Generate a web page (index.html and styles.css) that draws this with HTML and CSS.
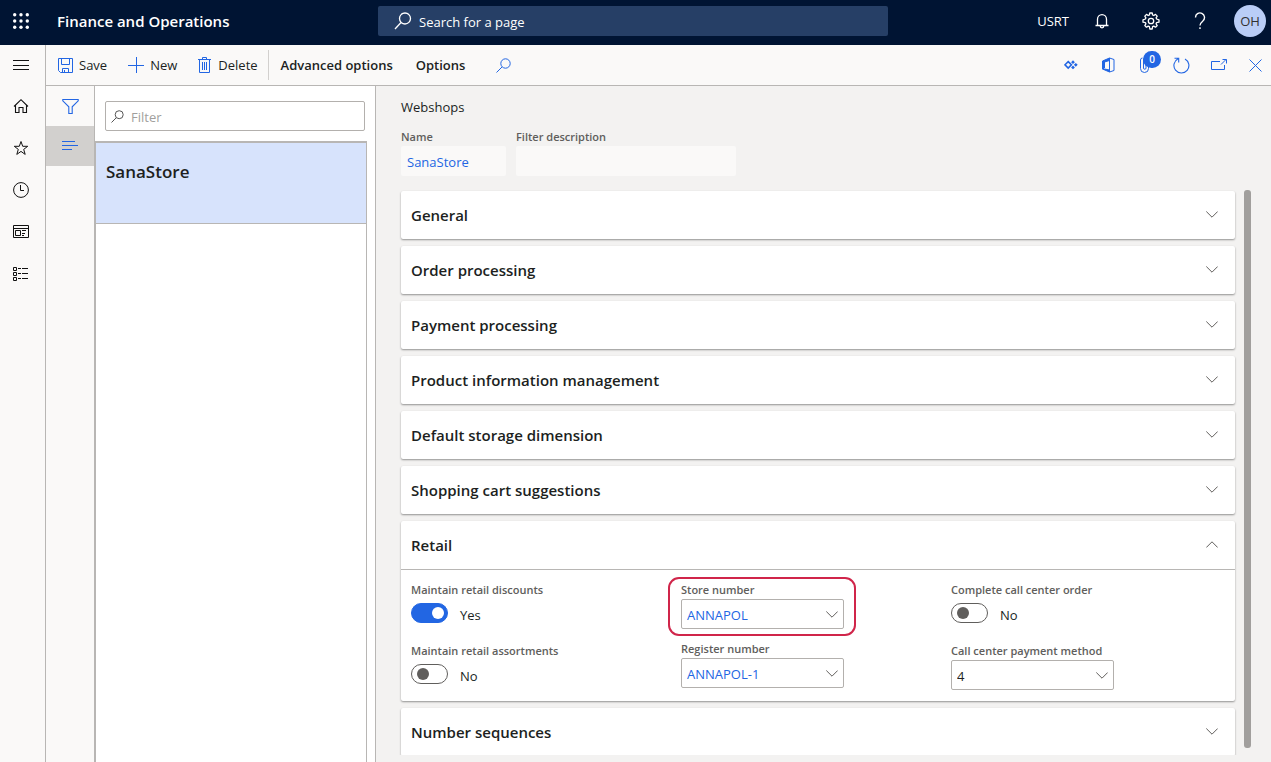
FILE: index.html
```html
<!DOCTYPE html>
<html lang="en">
<head>
  <meta charset="UTF-8">
  <title>Webshops - Finance and Operations</title>
  <meta name="viewport" content="width=device-width, initial-scale=1.0">
  <link rel="stylesheet" href="styles.css">
</head>
<body>

  <!-- Top bar -->
  <header class="topbar">
    <div class="brand">
      <button class="waffle" aria-label="App launcher">
        <svg width="16" height="16" viewBox="0 0 16 16" fill="#fff"><circle cx="1.700" cy="1.700" r="1.700"/><circle cx="8" cy="1.700" r="1.700"/><circle cx="14.300" cy="1.700" r="1.700"/><circle cx="1.700" cy="8" r="1.700"/><circle cx="8" cy="8" r="1.700"/><circle cx="14.300" cy="8" r="1.700"/><circle cx="1.700" cy="14.300" r="1.700"/><circle cx="8" cy="14.300" r="1.700"/><circle cx="14.300" cy="14.300" r="1.700"/></svg>
      </button>
      <span class="app-name">Finance and Operations</span>
    </div>
    <div class="page-search">
      <svg width="18" height="18" viewBox="0 0 18 18" fill="none" stroke="#fff" stroke-width="1.3"><circle cx="11" cy="6.5" r="5.5"/><path d="M7 10.5L1 17"/></svg>
      <input type="text" placeholder="Search for a page" aria-label="Search for a page">
    </div>
    <div class="top-actions">
      <span class="company">USRT</span>
      <button aria-label="Notifications">
        <svg width="14" height="16" viewBox="0 0 14 16" fill="none" stroke="#fff" stroke-width="1.3"><path d="M2.5 12.5V6.2a4.5 4.5 0 0 1 9 0v6.3M.5 12.5h13M5.2 13a1.8 1.8 0 0 0 3.6 0"/></svg>
      </button>
      <button aria-label="Settings">
        <svg width="18" height="18" viewBox="0 0 18 18" fill="none" stroke="#fff" stroke-width="1.3" stroke-linejoin="round"><path d="M7.8 1h2.4l.4 2 1.2.5L13.500 2.400l1.700 1.700-1.100 1.700.5 1.200 2.400.8v2.400l-2.400.4-.5 1.200 1.100 1.700-1.700 1.700-1.700-1.100-1.200.5-.4 2.400H7.800l-.4-2.400-1.200-.5-1.700 1.100-1.700-1.700 1.100-1.700-.5-1.200L1 10.200V7.800l2.400-.8.5-1.200-1.100-1.700 1.700-1.700 1.700 1.100 1.200-.5z"/><circle cx="9" cy="9" r="2.700"/></svg>
      </button>
      <button aria-label="Help">
        <svg width="12" height="18" viewBox="0 0 12 18" fill="none" stroke="#fff" stroke-width="1.400"><path d="M1.500 5.500a4.500 4.500 0 1 1 7.500 3.300C7 10.500 6 11.300 6 13.500"/><path d="M6 15.300v1.700"/></svg>
      </button>
      <button class="avatar" aria-label="Account">OH</button>
    </div>
  </header>

  <div class="shell">
    <!-- Navigation rail -->
    <nav class="nav-rail" aria-label="Main">
      <button class="menu-toggle" aria-label="Expand navigation">
        <svg width="16" height="10" viewBox="0 0 16 10" stroke="#111" stroke-width="1"><path d="M0 .5h16M0 5.500h16M0 9.500h16"/></svg>
      </button>
      <button aria-label="Home">
        <svg width="16" height="16" viewBox="0 0 16 16" fill="none" stroke="#111" stroke-width="1.100"><path d="M1 8.500L8 1.700l7 6.800M2.500 7.500v7H6V9.500h4v5h3.500v-7"/></svg>
      </button>
      <button aria-label="Favorites">
        <svg width="16" height="16" viewBox="0 0 16 16" fill="none" stroke="#111"><path d="M8 1.500l1.700 4.800h5l-4 3.100 1.500 5L8 11.400l-4.200 3 1.500-5-4-3.100h5z"/></svg>
      </button>
      <button aria-label="Recent">
        <svg width="16" height="16" viewBox="0 0 16 16" fill="none" stroke="#111"><circle cx="8" cy="8" r="7.400"/><path d="M7.500 3v5.500H11"/></svg>
      </button>
      <button aria-label="Workspaces">
        <svg width="16" height="14" viewBox="0 0 16 14" fill="none" stroke="#111"><path d="M.5.5h15v12H.5zM.5 3.500h15M2.500 5.500h5v5h-5zM9 5.500h4M9 8.500h3M9 10.500h2"/></svg>
      </button>
      <button aria-label="Modules">
        <svg width="16" height="14" viewBox="0 0 16 14" fill="none" stroke="#111"><path d="M.5.5h3v3h-3zM.5 5.500h3v3h-3zM.5 10.500h3v3h-3zM5 1.500h3M9 1.500h6M5 6.500h3M9 6.500h6M5 11.500h3M9 11.500h6"/></svg>
      </button>
    </nav>

    <div class="workspace">
      <!-- Action pane -->
      <div class="toolbar">
        <button class="action">
          <svg width="15" height="15" viewBox="0 0 15 15" fill="none" stroke="#2266e3"><path d="M.5.500h14v14h-12l-2-2zM3.500.500v6h8v-6M4.500 14.500v-4h6v4M6.500 12v2.500"/></svg>
          Save
        </button>
        <button class="action">
          <svg width="16" height="16" viewBox="0 0 16 16" fill="none" stroke="#2266e3"><path d="M0 8.500h16M8.500 0v16"/></svg>
          New
        </button>
        <button class="action delete">
          <svg width="13" height="16" viewBox="0 0 13 16" fill="none" stroke="#2266e3"><path d="M0 2.500h13M4.500 2.500v-2h4v2M1.500 2.500v13h10v-13M4.500 5v8M6.500 5v8M8.500 5v8"/></svg>
          Delete
        </button>
        <div class="tabs">
          <button class="tab">Advanced options</button>
          <button class="tab">Options</button>
          <button class="find" aria-label="Search actions">
            <svg width="15" height="15" viewBox="0 0 15 15" fill="none" stroke="#2266e3"><circle cx="9.500" cy="5.500" r="4.700"/><path d="M6 9L.5 14.500"/></svg>
          </button>
        </div>
        <div class="tools">
          <button aria-label="Power Apps">
            <svg width="14" height="10" viewBox="0 0 14 10" fill="#2266e3"><path d="M4.200 1.600L7.400 4.800 4.200 8 1 4.800z" fill="none" stroke="#2266e3" stroke-width="1.600"/><path d="M9 .3l1.900 1.900L9 4.100 7.100 2.200zM11.800 2.900l1.900 1.900-1.900 1.900-1.900-1.900zM9 5.500l1.900 1.900L9 9.300 7.100 7.400z"/></svg>
          </button>
          <button aria-label="Open in Office">
            <svg width="14" height="16" viewBox="0 0 14 16" fill="none" stroke="#2266e3"><path d="M8.500 1l4.500 1.500v11L8.500 15z"/><path d="M8.500 1L1.500 4v8l2-1V5l5-1.500M1.500 12l7 3v-2l-5-1" fill="#2266e3"/></svg>
          </button>
          <button class="attach" aria-label="Attachments">
            <svg width="9" height="16" viewBox="0 0 9 16" fill="none" stroke="#2266e3"><path d="M.5 3v8.500a4 4 0 0 0 8 0V3a2.500 2.500 0 0 0-5 0v8a1.200 1.200 0 0 0 2.500 0V4M.5 3a2 2 0 0 1 2-2"/></svg>
            <span class="badge">0</span>
          </button>
          <button aria-label="Refresh">
            <svg width="17" height="17" viewBox="0 0 17 17" fill="none" stroke="#2266e3" stroke-width="1.100"><path d="M12 1.900A7.500 7.500 0 1 1 5 1.800M1.500 1.300h4.200v4.200"/></svg>
          </button>
          <button aria-label="Open in new window">
            <svg width="16" height="12" viewBox="0 0 16 12" fill="none" stroke="#2266e3"><path d="M9 2.500H.5v8h13V6M10 5.500l5-5M11.500.500h4v4"/></svg>
          </button>
          <button aria-label="Close">
            <svg width="13" height="13" viewBox="0 0 13 13" fill="none" stroke="#2266e3"><path d="M.5.500l12 12M12.500.500l-12 12"/></svg>
          </button>
        </div>
      </div>

      <div class="content">
        <div class="side-tabs">
          <button aria-label="Show filters">
            <svg width="17" height="15" viewBox="0 0 17 15" fill="none" stroke="#2266e3" stroke-width="1.100"><path d="M.8.500h15.400v1.300l-6 6v6.700H6.800V7.800l-6-6z"/></svg>
          </button>
          <button class="selected" aria-label="Show list">
            <svg width="16" height="10" viewBox="0 0 16 10" stroke="#2266e3"><path d="M0 .5h13M0 4.500h16M0 8.500h10"/></svg>
          </button>
        </div>

        <!-- Record list -->
        <section class="list-panel">
          <div class="filter">
            <svg width="13" height="13" viewBox="0 0 13 13" fill="none" stroke="#555"><circle cx="8.200" cy="4.700" r="4"/><path d="M5.300 7.700L.5 12.500"/></svg>
            <input type="text" placeholder="Filter" aria-label="Filter">
          </div>
          <div class="records">
            <button class="record">SanaStore</button>
          </div>
        </section>

        <!-- Form -->
        <main class="form">
          <h1>Webshops</h1>
          <div class="form-header">
            <div class="field name">
              <label for="name">Name</label>
              <input type="text" id="name" value="SanaStore">
            </div>
            <div class="field description">
              <label for="description">Filter description</label>
              <input type="text" id="description">
            </div>
          </div>

          <div class="scroll-area">
            <div class="cards">
              <section class="card">
                <button class="card-head">General <svg class="chevron" viewBox="0 0 12 7"><path d="M.3.500L6 6.200 11.700.500"/></svg></button>
              </section>
              <section class="card">
                <button class="card-head">Order processing <svg class="chevron" viewBox="0 0 12 7"><path d="M.3.500L6 6.200 11.700.500"/></svg></button>
              </section>
              <section class="card">
                <button class="card-head">Payment processing <svg class="chevron" viewBox="0 0 12 7"><path d="M.3.500L6 6.200 11.700.500"/></svg></button>
              </section>
              <section class="card">
                <button class="card-head">Product information management <svg class="chevron" viewBox="0 0 12 7"><path d="M.3.500L6 6.200 11.700.500"/></svg></button>
              </section>
              <section class="card">
                <button class="card-head">Default storage dimension <svg class="chevron" viewBox="0 0 12 7"><path d="M.3.500L6 6.200 11.700.500"/></svg></button>
              </section>
              <section class="card">
                <button class="card-head">Shopping cart suggestions <svg class="chevron" viewBox="0 0 12 7"><path d="M.3.500L6 6.200 11.700.500"/></svg></button>
              </section>

              <section class="card">
                <button class="card-head" aria-expanded="true">Retail <svg class="chevron" viewBox="0 0 12 7"><path d="M.3 6.500L6 .8l5.700 5.700"/></svg></button>
                <div class="card-body">
                  <div class="column">
                    <div class="field">
                      <label for="discounts">Maintain retail discounts</label>
                      <div class="switch">
                        <input type="checkbox" id="discounts" checked>
                        <span>Yes</span>
                      </div>
                    </div>
                    <div class="field">
                      <label for="assortments">Maintain retail assortments</label>
                      <div class="switch">
                        <input type="checkbox" id="assortments">
                        <span>No</span>
                      </div>
                    </div>
                  </div>
                  <div class="column">
                    <div class="field highlight">
                      <label for="store">Store number</label>
                      <div class="dropdown">
                        <select id="store" class="lookup"><option>ANNAPOL</option></select>
                        <svg class="chevron" viewBox="0 0 12 7"><path d="M.3.500L6 6.200 11.700.500"/></svg>
                      </div>
                    </div>
                    <div class="field">
                      <label for="register">Register number</label>
                      <div class="dropdown">
                        <select id="register" class="lookup"><option>ANNAPOL-1</option></select>
                        <svg class="chevron" viewBox="0 0 12 7"><path d="M.3.500L6 6.200 11.700.500"/></svg>
                      </div>
                    </div>
                  </div>
                  <div class="column">
                    <div class="field">
                      <label for="complete">Complete call center order</label>
                      <div class="switch">
                        <input type="checkbox" id="complete">
                        <span>No</span>
                      </div>
                    </div>
                    <div class="field">
                      <label for="payment">Call center payment method</label>
                      <div class="dropdown">
                        <select id="payment"><option>4</option></select>
                        <svg class="chevron" viewBox="0 0 12 7"><path d="M.3.500L6 6.200 11.700.500"/></svg>
                      </div>
                    </div>
                  </div>
                </div>
              </section>

              <section class="card">
                <button class="card-head">Number sequences <svg class="chevron" viewBox="0 0 12 7"><path d="M.3.500L6 6.200 11.700.500"/></svg></button>
              </section>
            </div>
            <div class="scrollbar"></div>
          </div>
        </main>
      </div>
    </div>
  </div>

</body>
</html>
```

FILE: styles.css
```css
* {
  box-sizing: border-box;
}
body {
  margin: 0;
  height: 100vh;
  display: flex;
  flex-direction: column;
  overflow: hidden;
  font-family: "Open Sans", "Noto Sans", sans-serif;
  font-size: 13px;
  color: #201f1e;
  background: #faf9f8;
}
button,
input,
select {
  font: inherit;
  color: inherit;
}
button {
  display: flex;
  align-items: center;
  justify-content: center;
  padding: 0;
  border: none;
  background: none;
  cursor: pointer;
}
svg {
  flex: none;
}

/* Top bar */
.topbar {
  display: grid;
  grid-template-columns: 1fr minmax(200px, 510px) 1fr;
  align-items: center;
  height: 45px;
  padding: 0 5px 3px 0;
  background: #001433;
  color: #fff;
}
.brand {
  display: flex;
  align-items: center;
}
.waffle {
  width: 42px;
  height: 42px;
}
.app-name {
  margin-left: 15px;
  font-size: 15px;
  font-weight: 600;
  white-space: nowrap;
}
.page-search {
  display: flex;
  align-items: center;
  gap: 7px;
  height: 30px;
  padding-left: 16px;
  border-radius: 2px;
  background: #263f66;
}
.page-search input {
  flex: 1;
  min-width: 0;
  padding: 1px 0 0 0;
  border: none;
  outline: none;
  background: none;
}
.page-search input::placeholder {
  color: #fff;
}
.top-actions {
  display: flex;
  align-items: center;
  justify-content: flex-end;
}
.top-actions button {
  width: 49px;
  height: 42px;
}
.company {
  margin-right: 8px;
}
.top-actions .avatar {
  width: 32px;
  height: 32px;
  margin-left: 10px;
  border-radius: 50%;
  background: #b9cdf7;
  color: #323130;
}

/* Page frame */
.shell {
  flex: 1;
  display: flex;
  min-height: 0;
}
.nav-rail {
  flex: none;
  width: 46px;
  border-right: 1px solid #b8b6b4;
}
.nav-rail button {
  width: 42px;
  height: 42px;
}
.nav-rail .menu-toggle {
  height: 40px;
}
.workspace {
  flex: 1;
  display: flex;
  flex-direction: column;
  min-width: 0;
}

/* Action pane */
.toolbar {
  display: flex;
  align-items: center;
  height: 41px;
  padding-left: 12px;
  border-bottom: 1px solid #b8b6b4;
}
.action {
  gap: 6px;
  height: 40px;
  margin-right: 21px;
}
.action.delete {
  gap: 7px;
  margin-right: 10px;
}
.tabs {
  display: flex;
  align-items: center;
  gap: 23px;
  height: 30px;
  padding-left: 12px;
  border-left: 1px solid #d2d0ce;
}
.tab {
  font-weight: 600;
  white-space: nowrap;
}
.find {
  margin-left: 8px;
}
.tools {
  display: flex;
  gap: 6px;
  margin-left: auto;
}
.tools button {
  width: 31px;
  height: 40px;
}
.attach {
  position: relative;
}
.badge {
  position: absolute;
  top: 6px;
  left: 14px;
  width: 18px;
  border-radius: 9px;
  background: #2266e3;
  color: #fff;
  font-size: 10px;
  font-weight: 600;
  line-height: 17px;
}

/* Record list */
.content {
  flex: 1;
  display: flex;
  min-height: 0;
}
.side-tabs {
  flex: none;
  width: 49px;
  border-right: 1px solid #b8b6b4;
}
.side-tabs button {
  width: 48px;
  height: 40px;
}
.side-tabs .selected {
  background: #d2d0ce;
}
.list-panel {
  flex: none;
  display: flex;
  flex-direction: column;
  width: 281px;
  padding: 15px 8px 0 0;
  border-right: 1px solid #b8b6b4;
  background: #fff;
}
.filter {
  display: flex;
  align-items: center;
  gap: 7px;
  height: 30px;
  margin: 0 2px 10px 10px;
  padding-left: 5px;
  border: 1px solid #b3b0ad;
  border-radius: 2px;
}
.filter input {
  flex: 1;
  min-width: 0;
  padding: 1px 0 0 0;
  border: none;
  outline: none;
  background: none;
}
.filter input::placeholder {
  color: #a19f9d;
}
.records {
  flex: 1;
  border: 1px solid #b8b6b4;
  border-width: 2px 1px 0 1px;
}
.record {
  align-items: flex-start;
  justify-content: flex-start;
  width: 100%;
  height: 81px;
  padding: 17px 10px;
  border-bottom: 1px solid #b8b6b4;
  background: #d7e3fc;
  font-size: 17px;
  font-weight: 600;
  line-height: 24px;
}

/* Form */
.form {
  flex: 1;
  display: flex;
  flex-direction: column;
  min-width: 0;
  padding: 11px 20px 7px 20px;
  background: #f3f2f1;
}
h1 {
  margin: 0 0 10px 5px;
  font-size: 13px;
  font-weight: 400;
  line-height: 20px;
}
.form-header {
  display: flex;
  gap: 10px;
  margin: 0 0 14px 5px;
}
.field label {
  display: block;
  color: #605e5c;
  font-size: 11px;
  font-weight: 600;
  line-height: 18px;
  white-space: nowrap;
}
.form-header .field input {
  display: block;
  width: 100%;
  height: 30px;
  padding: 2px 6px 0 6px;
  border: none;
  border-radius: 2px;
  background: #faf9f8;
  color: #2266e3;
}
.form-header .field label {
  line-height: 19px;
}
.name {
  width: 105px;
}
.description {
  width: 220px;
}
.scroll-area {
  flex: 1;
  display: flex;
  min-height: 0;
}
.cards {
  flex: 1;
  display: flex;
  flex-direction: column;
  gap: 7px;
  min-width: 0;
  padding: 1px 9px 0 5px;
  overflow: hidden;
}
.scrollbar {
  width: 7px;
  margin-bottom: 7px;
  border-radius: 3px;
  background: #a19f9d;
}
.card {
  flex: none;
  border-radius: 2px;
  background: #fff;
  box-shadow: 0 1px 2px rgba(0, 0, 0, 0.4);
}
.card-head {
  justify-content: space-between;
  width: 100%;
  height: 48px;
  padding: 0 17px 1px 10px;
  font-size: 15px;
  font-weight: 600;
}
.card-body {
  display: grid;
  grid-template-columns: repeat(auto-fill, 260px);
  gap: 10px;
  padding: 11px 10px 9px 10px;
  border-top: 1px solid #b8b6b4;
}
.chevron {
  width: 12px;
  height: 7px;
  fill: none;
  stroke: #605e5c;
}
.column {
  display: flex;
  flex-direction: column;
  gap: 11px;
  width: 163px;
}
.switch {
  display: flex;
  gap: 12px;
  height: 32px;
  line-height: 32px;
}
.switch input {
  appearance: none;
  width: 37px;
  height: 20px;
  margin: 4px 0 0 0;
  padding: 3px 5px;
  border: 1px solid #605e5c;
  border-radius: 10px;
}
.switch input::before {
  content: "";
  display: block;
  width: 12px;
  height: 12px;
  border-radius: 50%;
  background: #605e5c;
}
.switch input:checked {
  padding-right: 3px;
  border-color: #2266e3;
  background: #2266e3;
}
.switch input:checked::before {
  margin-left: auto;
  background: #fff;
}
.dropdown {
  position: relative;
}
.dropdown select {
  display: block;
  appearance: none;
  width: 100%;
  height: 30px;
  padding: 2px 26px 0 5px;
  border: 1px solid #b3b0ad;
  border-radius: 2px;
  background: #fff;
}
.dropdown .lookup {
  color: #2266e3;
}
.dropdown .chevron {
  position: absolute;
  top: 12px;
  right: 6px;
  pointer-events: none;
}
.highlight {
  position: relative;
}
.highlight::after {
  content: "";
  position: absolute;
  inset: -4px -12px -7px -13px;
  border: 2px solid #d0254a;
  border-radius: 11px;
  pointer-events: none;
}
```
